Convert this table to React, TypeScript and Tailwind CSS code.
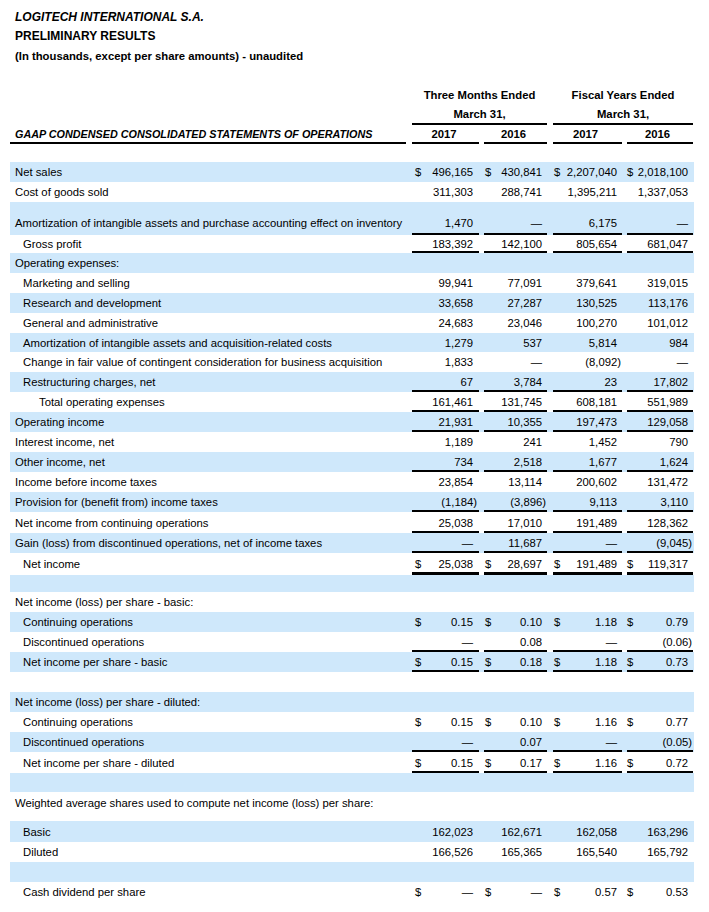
type Line = "none" | "single" | "double";

type RowData = {
  label?: string;
  indent?: 0 | 1 | 2;
  vals?: string[];
  dollar?: boolean;
  line?: Line;
  h: string;
  align?: string;
};

const cols = [
  "ml-[6px] w-[67px] pr-[6px] pl-[3px]",
  "ml-[5px] w-[63px] pr-[5px] pl-[1px]",
  "ml-[6px] w-[69px] pr-[5px] pl-[1px]",
  "ml-[5px] w-[66px] pr-[5px] pl-0",
];

const indents = ["pl-[5px]", "pl-[13px]", "pl-[29px]"];

const rows: RowData[] = [
  { label: "Net sales", h: "h-[20px]", dollar: true, vals: ["496,165", "430,841", "2,207,040", "2,018,100"] },
  { label: "Cost of goods sold", h: "h-[20px]", vals: ["311,303", "288,741", "1,395,211", "1,337,053"] },
  {
    label: "Amortization of intangible assets and purchase accounting effect on inventory",
    h: "h-[33px]",
    align: "items-end pb-[5px]",
    line: "single",
    vals: ["1,470", "—", "6,175", "—"],
  },
  { label: "Gross profit", indent: 1, h: "h-[18px]", line: "single", vals: ["183,392", "142,100", "805,654", "681,047"] },
  { label: "Operating expenses:", h: "h-[20px]" },
  { label: "Marketing and selling", indent: 1, h: "h-[20px]", vals: ["99,941", "77,091", "379,641", "319,015"] },
  { label: "Research and development", indent: 1, h: "h-[20px]", vals: ["33,658", "27,287", "130,525", "113,176"] },
  { label: "General and administrative", indent: 1, h: "h-[20px]", vals: ["24,683", "23,046", "100,270", "101,012"] },
  { label: "Amortization of intangible assets and acquisition-related costs", indent: 1, h: "h-[19px]", vals: ["1,279", "537", "5,814", "984"] },
  { label: "Change in fair value of contingent consideration for business acquisition", indent: 1, h: "h-[20px]", vals: ["1,833", "—", "(8,092)", "—"] },
  { label: "Restructuring charges, net", indent: 1, h: "h-[20px]", line: "single", vals: ["67", "3,784", "23", "17,802"] },
  { label: "Total operating expenses", indent: 2, h: "h-[20px]", line: "single", vals: ["161,461", "131,745", "608,181", "551,989"] },
  { label: "Operating income", h: "h-[20px]", line: "single", vals: ["21,931", "10,355", "197,473", "129,058"] },
  { label: "Interest income, net", h: "h-[20px]", vals: ["1,189", "241", "1,452", "790"] },
  { label: "Other income, net", h: "h-[20px]", line: "single", vals: ["734", "2,518", "1,677", "1,624"] },
  { label: "Income before income taxes", h: "h-[20px]", vals: ["23,854", "13,114", "200,602", "131,472"] },
  { label: "Provision for (benefit from) income taxes", h: "h-[20px]", line: "single", vals: ["(1,184)", "(3,896)", "9,113", "3,110"] },
  { label: "Net income from continuing operations", h: "h-[21px]", line: "single", vals: ["25,038", "17,010", "191,489", "128,362"] },
  { label: "Gain (loss) from discontinued operations, net of income taxes", h: "h-[20px]", line: "single", vals: ["—", "11,687", "—", "(9,045)"] },
  { label: "Net income", indent: 1, h: "h-[22px]", line: "double", dollar: true, vals: ["25,038", "28,697", "191,489", "119,317"] },
  { h: "h-[17px]" },
  { label: "Net income (loss) per share - basic:", h: "h-[20px]" },
  { label: "Continuing operations", indent: 1, h: "h-[20px]", dollar: true, vals: ["0.15", "0.10", "1.18", "0.79"] },
  { label: "Discontinued operations", indent: 1, h: "h-[20px]", line: "single", vals: ["—", "0.08", "—", "(0.06)"] },
  { label: "Net income per share - basic", indent: 1, h: "h-[20px]", line: "single", dollar: true, vals: ["0.15", "0.18", "1.18", "0.73"] },
  { h: "h-[20px]" },
  { label: "Net income (loss) per share - diluted:", h: "h-[20px]" },
  { label: "Continuing operations", indent: 1, h: "h-[20px]", dollar: true, vals: ["0.15", "0.10", "1.16", "0.77"] },
  { label: "Discontinued operations", indent: 1, h: "h-[20px]", line: "single", vals: ["—", "0.07", "—", "(0.05)"] },
  { label: "Net income per share - diluted", indent: 1, h: "h-[21px]", line: "single", dollar: true, vals: ["0.15", "0.17", "1.16", "0.72"] },
  { h: "h-[19px]" },
  { label: "Weighted average shares used to compute net income (loss) per share:", h: "h-[29px]", align: "items-start pt-[4px]" },
  { label: "Basic", indent: 1, h: "h-[21px]", vals: ["162,023", "162,671", "162,058", "163,296"] },
  { label: "Diluted", indent: 1, h: "h-[20px]", vals: ["166,526", "165,365", "165,540", "165,792"] },
  { h: "h-[20px]" },
  { label: "Cash dividend per share", indent: 1, h: "h-[20px]", dollar: true, vals: ["—", "—", "0.57", "0.53"] },
];

function Value({ v }: { v: string }) {
  // parentheses hang past the digit column
  if (v.startsWith("(")) return <span className="mr-[-4px]">{v}</span>;
  return <span>{v}</span>;
}

function Row({ row, blue }: { row: RowData; blue: boolean }) {
  const align = row.align ?? "items-center";
  const line =
    row.line === "double"
      ? "shadow-[inset_0_-3px_0_#000]"
      : row.line === "single"
        ? "shadow-[inset_0_-2px_0_#000]"
        : "";
  return (
    <div className={`flex w-[684px] ${row.h} ${blue ? "bg-[#cfe8fb]" : "bg-white"}`}>
      <div className={`flex w-[396px] shrink-0 whitespace-nowrap ${align} ${indents[row.indent ?? 0]}`}>
        {row.label}
      </div>
      {row.vals &&
        row.vals.map((v, i) => (
          <div
            key={i}
            className={`flex shrink-0 whitespace-nowrap ${align} ${cols[i]} ${line} ${row.dollar ? "justify-between" : "justify-end"}`}
          >
            {row.dollar && <span>$</span>}
            <Value v={v} />
          </div>
        ))}
    </div>
  );
}

export default function App() {
  return (
    <div className="w-[709px] h-[912px] overflow-hidden bg-white text-black font-['Liberation_Sans',Arial,sans-serif]">
      {/* Title */}
      <div className="pt-[8px] pl-[15px]">
        <div className="text-[12px] leading-[19px] font-bold italic">LOGITECH INTERNATIONAL S.A.</div>
        <div className="text-[12px] leading-[19px] font-bold">PRELIMINARY RESULTS</div>
        <div className="text-[11.3px] leading-[20px] font-bold">(In thousands, except per share amounts) - unaudited</div>
      </div>

      <div className="ml-[10px] mt-[20px] text-[11.3px] leading-[14px]">
        {/* Column headers */}
        <div className="flex h-[39px] font-bold">
          <div className="w-[396px] shrink-0" />
          <div className="ml-[6px] w-[135px] shrink-0 text-center leading-[19px] shadow-[inset_0_-2px_0_#000]">
            <div>Three Months Ended</div>
            <div>March 31,</div>
          </div>
          <div className="ml-[6px] w-[140px] shrink-0 text-center leading-[19px] shadow-[inset_0_-2px_0_#000]">
            <div>Fiscal Years Ended</div>
            <div>March 31,</div>
          </div>
        </div>
        <div className="flex h-[19px] font-bold">
          <div className="flex w-[396px] shrink-0 items-center pl-[5px] pb-[2px] text-[10.8px] italic shadow-[inset_0_-2px_0_#000]">
            GAAP CONDENSED CONSOLIDATED STATEMENTS OF OPERATIONS
          </div>
          {["2017", "2016", "2017", "2016"].map((y, i) => (
            <div
              key={i}
              className={`flex shrink-0 items-center justify-center pb-[2px] shadow-[inset_0_-2px_0_#000] ${cols[i]}`}
            >
              {y}
            </div>
          ))}
        </div>
        <div className="h-[18px]" />

        {/* Statement rows */}
        {rows.map((r, i) => (
          <Row key={i} row={r} blue={i % 2 === 0} />
        ))}
      </div>
    </div>
  );
}
